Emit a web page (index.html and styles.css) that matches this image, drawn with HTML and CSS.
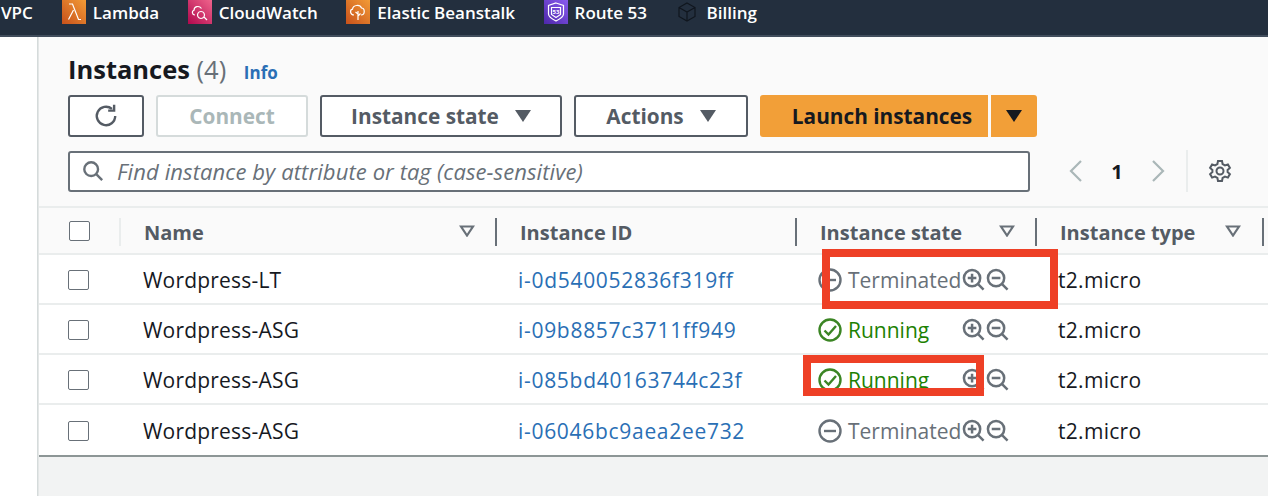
FILE: index.html
```html
<!DOCTYPE html>
<html>
<head>
    <title>Instances</title>
    <link rel="stylesheet" href="styles.css">
</head>
<body>
    <svg class="sprites" width="0" height="0">
        <symbol id="zoomIn" viewBox="0 0 24 24"><circle cx="10.5" cy="10.5" r="8.5"/><path d="M16.5 16.5l6 6M6 10.5h9M10.5 6v9"/></symbol>
        <symbol id="zoomOut" viewBox="0 0 24 24"><circle cx="10.5" cy="10.5" r="8.5"/><path d="M16.5 16.5l6 6M6 10.5h9"/></symbol>
        <symbol id="sort" viewBox="0 0 16 12"><path d="M2 1.5h12l-6 9z"/></symbol>
        <symbol id="stopped" viewBox="0 0 24 24"><circle cx="12" cy="12" r="10.5"/><path d="M6 12h12"/></symbol>
        <symbol id="ok" viewBox="0 0 24 24"><circle cx="12" cy="12" r="10.5"/><path d="M6.5 12.5l4 4 7.5-8.5"/></symbol>
    </svg>

    <nav class="topbar">
        <span class="nav-item vpc">VPC</span>
        <a class="nav-item">
            <span class="service lambda"><svg viewBox="0 0 24 24"><path d="M7 4h3.500l6 15.500H19M11.500 10L6.500 19.500"/></svg></span>
            Lambda
        </a>
        <a class="nav-item">
            <span class="service cloudwatch"><svg viewBox="0 0 24 24"><path d="M7 15c-3 0-3.500-4-1-4.800C6 6.500 11 5 13.500 8.500M13 11.500a3.500 3.500 0 1 0 .01 0M16 17l3 3"/></svg></span>
            CloudWatch
        </a>
        <a class="nav-item">
            <span class="service beanstalk"><svg viewBox="0 0 24 24"><path d="M8 15c-4 0-4.500-5-1.500-5.800C7 5 14 4 15.500 8c3.500 0 4 7-.5 7M12 20v-9M12 14l-2.500-2M12 16l2.500-2.500"/></svg></span>
            Elastic Beanstalk
        </a>
        <a class="nav-item">
            <span class="service route53"><svg viewBox="0 0 24 24"><path d="M12 3l7.500 2.500v8.500c0 3-3.500 5-7.500 7-4-2-7.500-4-7.500-7V5.500z"/><path d="M7.500 7.500h9v7l-4.500 3-4.500-3z"/><text x="12" y="14" class="route-num">53</text></svg></span>
            Route 53
        </a>
        <a class="nav-item">
            <span class="service billing"><svg viewBox="0 0 24 24"><path d="M12 3l8 4.500v9L12 21l-8-4.500v-9zM4 7.500l8 4.500 8-4.500M12 12v9"/></svg></span>
            Billing
        </a>
    </nav>

    <div class="layout">
        <aside class="side"></aside>
        <main class="content">
            <section class="panel">
                <header class="panel-head">
                    <h1 class="title">Instances <span class="count">(4)</span> <a class="info">Info</a></h1>

                    <div class="toolbar">
                        <button class="btn refresh" aria-label="Refresh">
                            <svg viewBox="0 0 24 24" class="ico-refresh"><path d="M20.500 12a8.500 8.500 0 1 1-3-6.500"/><path d="M19.500 1.500v5.500H14"/></svg>
                        </button>
                        <button class="btn connect">Connect</button>
                        <button class="btn state">Instance state <i class="caret"></i></button>
                        <button class="btn actions">Actions <i class="caret"></i></button>
                        <div class="launch">
                            <button class="btn primary main">Launch instances</button>
                            <button class="btn primary more" aria-label="More"><i class="caret dark"></i></button>
                        </div>
                    </div>

                    <div class="filter-row">
                        <label class="search">
                            <svg viewBox="0 0 24 24" class="ico-search"><circle cx="10" cy="10" r="7.500"/><path d="M15.500 15.500l6.500 6.500"/></svg>
                            <input type="text" placeholder="Find instance by attribute or tag (case-sensitive)">
                        </label>
                        <div class="pager">
                            <svg viewBox="0 0 16 24" class="chev"><path d="M13 2L3 12l10 10"/></svg>
                            <span class="page">1</span>
                            <svg viewBox="0 0 16 24" class="chev"><path d="M3 2l10 10L3 22"/></svg>
                        </div>
                        <span class="pager-sep"></span>
                        <svg viewBox="0 0 24 24" class="ico-gear"><path d="M10 2h4l.6 3 2.400 1.400 2.900-1 2 3.500-2.300 2v2.200l2.300 2-2 3.500-2.900-1L14.600 19l-.6 3h-4l-.6-3L7 17.600l-2.900 1-2-3.500 2.300-2v-2.200l-2.300-2 2-3.500 2.900 1L9.400 5z"/><circle cx="12" cy="12" r="3.500"/></svg>
                    </div>
                </header>

                <div class="table">
                    <div class="row head">
                        <div class="cell check"><span class="box"></span></div>
                        <div class="cell col-name">Name <svg class="sort"><use href="#sort"/></svg></div>
                        <div class="cell col-id">Instance ID</div>
                        <div class="cell col-state">Instance state <svg class="sort"><use href="#sort"/></svg></div>
                        <div class="cell col-type">Instance type <svg class="sort"><use href="#sort"/></svg></div>
                    </div>

                    <div class="row">
                        <div class="cell check"><span class="box"></span></div>
                        <div class="cell name">Wordpress-LT</div>
                        <div class="cell"><a class="link">i-0d540052836f319ff</a></div>
                        <div class="cell">
                            <span class="status off"><svg><use href="#stopped"/></svg>Terminated</span>
                            <svg class="mag"><use href="#zoomIn"/></svg><svg class="mag"><use href="#zoomOut"/></svg>
                        </div>
                        <div class="cell type">t2.micro</div>
                    </div>
                    <div class="row">
                        <div class="cell check"><span class="box"></span></div>
                        <div class="cell name">Wordpress-ASG</div>
                        <div class="cell"><a class="link">i-09b8857c3711ff949</a></div>
                        <div class="cell">
                            <span class="status on"><svg><use href="#ok"/></svg>Running</span>
                            <svg class="mag"><use href="#zoomIn"/></svg><svg class="mag"><use href="#zoomOut"/></svg>
                        </div>
                        <div class="cell type">t2.micro</div>
                    </div>
                    <div class="row">
                        <div class="cell check"><span class="box"></span></div>
                        <div class="cell name">Wordpress-ASG</div>
                        <div class="cell"><a class="link">i-085bd40163744c23f</a></div>
                        <div class="cell">
                            <span class="status on"><svg><use href="#ok"/></svg>Running</span>
                            <svg class="mag"><use href="#zoomIn"/></svg><svg class="mag"><use href="#zoomOut"/></svg>
                        </div>
                        <div class="cell type">t2.micro</div>
                    </div>
                    <div class="row">
                        <div class="cell check"><span class="box"></span></div>
                        <div class="cell name">Wordpress-ASG</div>
                        <div class="cell"><a class="link">i-06046bc9aea2ee732</a></div>
                        <div class="cell">
                            <span class="status off"><svg><use href="#stopped"/></svg>Terminated</span>
                            <svg class="mag"><use href="#zoomIn"/></svg><svg class="mag"><use href="#zoomOut"/></svg>
                        </div>
                        <div class="cell type">t2.micro</div>
                    </div>
                </div>
            </section>
        </main>
    </div>

    <!-- red annotation boxes drawn over the screenshot -->
    <div class="mark mark-one"></div>
    <div class="mark mark-two"></div>
</body>
</html>
```

FILE: styles.css
```css
* {
    box-sizing: border-box;
}
html, body {
    margin: 0;
    height: 496px;
    overflow: hidden;
}
body {
    position: relative;
    background: #fff;
    font-family: "Open Sans", "Noto Sans", sans-serif;
    color: #16191f;
}
button, input {
    font-family: inherit;
}
.sprites {
    position: absolute;
}

/* top nav */
.topbar {
    display: flex;
    height: 37px;
    background: #232f3e;
    border-bottom: 2px solid #414d5c;
    color: #fff;
    font-size: 17px;
    font-weight: 600;
}
.nav-item {
    display: flex;
    align-items: flex-start;
    gap: 7px;
    line-height: 26px;
    margin-right: 28.500px;
}
.vpc {
    margin-left: 1px;
    margin-right: 29px;
}
.service {
    display: block;
    width: 24px;
    height: 24px;
}
.service svg {
    display: block;
    width: 24px;
    height: 24px;
    fill: none;
    stroke: #fff;
    stroke-width: 1.200;
}
.service .route-num {
    fill: #fff;
    stroke: none;
    font-size: 6px;
    font-weight: 700;
    text-anchor: middle;
}
.lambda, .beanstalk {
    background: linear-gradient(45deg, #c8511b, #f29b36);
}
.cloudwatch {
    background: linear-gradient(45deg, #b0084d, #f0648c);
}
.route53 {
    background: linear-gradient(45deg, #4d27aa, #8a5cf0);
}
.billing svg {
    stroke: #10161e;
}

/* page */
.layout {
    display: flex;
    height: 459px;
}
.side {
    width: 38px;
    background: #fff;
    border-right: 1px solid #d5dbdb;
}
.content {
    flex: 1;
    background: #f2f3f3;
    border-left: 1px solid #e4e7e7;
}
.panel {
    border-bottom: 2px solid #8d9696;
    background: #fff;
}
.panel-head {
    height: 171px;
    padding: 14px 0 0 29px;
    background: #fafafa;
    border-bottom: 2px solid #eaeded;
}
.title {
    margin: 0;
    font-size: 25.500px;
    line-height: 36px;
    font-weight: 700;
}
.count {
    font-weight: 400;
    color: #687078;
}
.info {
    margin-left: 11px;
    font-size: 17px;
    font-weight: 700;
    color: #2a6fb5;
}

/* buttons */
.toolbar {
    display: flex;
    gap: 12px;
    margin-top: 4px;
}
.btn {
    display: flex;
    align-items: center;
    justify-content: center;
    height: 42px;
    padding: 0;
    background: #fff;
    border: 2px solid #545b64;
    border-radius: 3px;
    color: #545b64;
    font-size: 20.800px;
    font-weight: 700;
}
.refresh {
    width: 76px;
}
.ico-refresh {
    width: 26px;
    height: 26px;
    fill: none;
    stroke: #545b64;
    stroke-width: 2.200;
}
.connect {
    width: 152px;
    border-color: #d5dbdb;
    color: #aab7b8;
}
.state {
    width: 242px;
    gap: 16px;
}
.actions {
    width: 174px;
    gap: 16px;
}
.caret {
    display: block;
    width: 0;
    height: 0;
    border-left: 8px solid transparent;
    border-right: 8px solid transparent;
    border-top: 12px solid #545b64;
}
.caret.dark {
    border-top-color: #16191f;
}
.launch {
    display: flex;
    gap: 3px;
}
.primary {
    background: #f29f38;
    border: 0;
    color: #16191f;
}
.main {
    width: 228px;
    padding-left: 16px;
    border-radius: 3px 0 0 3px;
}
.more {
    width: 46px;
    border-radius: 0 3px 3px 0;
}

/* search row */
.filter-row {
    display: flex;
    align-items: center;
    margin-top: 13px;
}
.search {
    display: flex;
    align-items: center;
    gap: 13px;
    width: 962px;
    height: 41px;
    padding-left: 12px;
    background: #fff;
    border: 2px solid #687078;
    border-radius: 3px;
}
.search input {
    flex: 1;
    border: 0;
    outline: 0;
    padding: 0;
    background: transparent;
    font-size: 22px;
    letter-spacing: 0.100px;
    font-style: italic;
}
.search input::placeholder {
    color: #687078;
    opacity: 1;
}
.ico-search {
    width: 22px;
    height: 22px;
    fill: none;
    stroke: #687078;
    stroke-width: 2.600;
}
.pager {
    display: flex;
    align-items: center;
    margin-left: 38px;
}
.chev {
    width: 16px;
    height: 24px;
    fill: none;
    stroke: #aab7b8;
    stroke-width: 2.200;
}
.page {
    width: 66px;
    text-align: center;
    font-size: 20px;
    font-weight: 700;
}
.pager-sep {
    width: 2px;
    height: 42px;
    margin-left: 20px;
    background: #eaeded;
}
.ico-gear {
    width: 24px;
    height: 24px;
    margin-left: 20px;
    fill: none;
    stroke: #545b64;
    stroke-width: 2;
}

/* table */
.row {
    display: grid;
    grid-template-columns: 80px 376px 300px 240px 1fr;
    height: 50px;
    border-bottom: 2px solid #eaeded;
    font-size: 21px;
}
.row:last-child {
    border-bottom: 0;
}
.row.head {
    height: 47px;
    background: #fafafa;
    color: #545b64;
    font-size: 20px;
    font-weight: 700;
}
.cell {
    position: relative;
    display: flex;
    align-items: center;
    padding-left: 25px;
    padding-top: 1px;
}
.row.head .cell {
    padding-left: 25px;
    padding-top: 4px;
}
.row.head .cell::before {
    content: "";
    position: absolute;
    left: 0;
    top: 10px;
    width: 2px;
    height: 28px;
    background: #687078;
}
.row.head .col-type::after {
    content: "";
    position: absolute;
    left: 227px;
    top: 10px;
    width: 2px;
    height: 28px;
    background: #687078;
}
.row.head .col-name::before {
    background: #eaeded;
}
.row.head .cell.check::before {
    display: none;
}
.row .check {
    padding-left: 29px;
}
.row.head .check {
    padding-top: 0;
    padding-left: 30px;
}
.row:not(.head) .cell:not(.check) {
    padding-left: 23px;
}
.row:not(.head) .cell.name {
    padding-left: 24px;
    letter-spacing: 0.200px;
}
.row:not(.head) .cell.type {
    letter-spacing: 0.300px;
}
.box {
    display: block;
    width: 21px;
    height: 20px;
    background: #fff;
    border: 1px solid #687078;
    border-radius: 2px;
}
.sort {
    position: absolute;
    right: 20px;
    top: 17px;
    width: 16px;
    height: 12px;
    fill: none;
    stroke: #687078;
    stroke-width: 2.200;
}
.col-type .sort {
    left: 190px;
    right: auto;
}
.link {
    color: #2a6fb5;
    letter-spacing: 0.700px;
}
.status {
    display: flex;
    align-items: center;
    gap: 6px;
    width: 144px;
    white-space: nowrap;
}
.status svg {
    flex: none;
    width: 24px;
    height: 24px;
    fill: none;
    stroke-width: 2.400;
}
.off {
    color: #687078;
}
.off svg {
    stroke: #687078;
}
.on {
    color: #1d8102;
}
.on svg {
    stroke: #3b8524;
}
.mag {
    flex: none;
    width: 23px;
    height: 23px;
    margin-right: 1px;
    fill: none;
    stroke: #687078;
    stroke-width: 2.600;
}

/* annotations */
.mark {
    position: absolute;
    border: 8px solid #ee4026;
}
.mark-one {
    left: 822px;
    top: 249px;
    width: 236px;
    height: 60px;
}
.mark-two {
    left: 803px;
    top: 355px;
    width: 181px;
    height: 41px;
}
```
